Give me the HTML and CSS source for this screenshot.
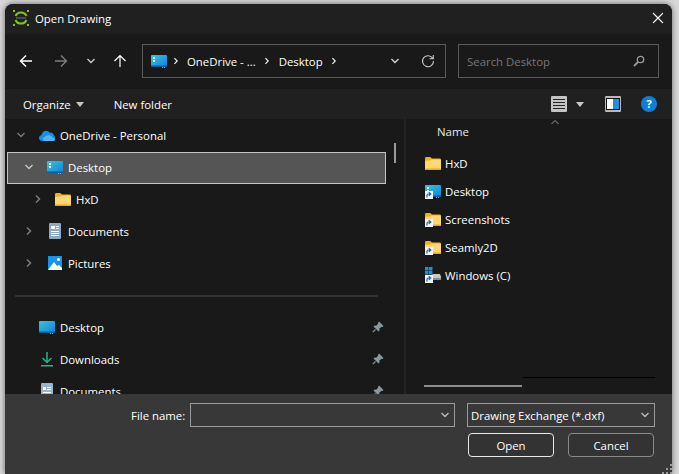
FILE: index.html
```html
<!DOCTYPE html>
<html lang="en">
<head>
  <meta charset="UTF-8" />
  <title>Open Drawing</title>
  <link rel="stylesheet" href="styles.css">
</head>
<body>

  <!-- icon sheet -->
  <svg class="icon-sheet" width="0" height="0">
    <symbol id="i-folder" viewBox="0 0 16 16">
      <path d="M0 3.500C0 2.700.5 2 1.300 2h4l1.700 1.500h7.700c.7 0 1.300.6 1.300 1.300V6H0z" fill="#f2b01e"/>
      <path d="M0 6l6-.8 1-.7h7.700c.7 0 1.300.6 1.300 1.300v7.900c0 .7-.6 1.300-1.300 1.300H1.300C.6 15 0 14.400 0 13.700z" fill="#fdd873"/>
      <path d="M0 13.500h16v.4c0 .6-.5 1.100-1.100 1.100H1.100C.5 15 0 14.500 0 13.900z" fill="#e8a81c"/>
    </symbol>
    <linearGradient id="g-desktop" x1="0" y1="0" x2="1" y2="1">
      <stop offset="0" stop-color="#35c4e2"/>
      <stop offset="1" stop-color="#1186d6"/>
    </linearGradient>
    <symbol id="i-desktop" viewBox="0 0 16 16">
      <rect x="0" y="2" width="16" height="11" rx="1" fill="url(#g-desktop)"/>
      <rect x="0" y="12.500" width="16" height="1.500" fill="#0f5c9e"/>
      <rect x="11" y="14" width="1" height="1" fill="#7fb8d8"/>
      <rect x="13" y="14" width="1" height="1" fill="#7fb8d8"/>
    </symbol>
    <symbol id="i-desktop-dots" viewBox="0 0 16 16">
      <use href="#i-desktop" width="16" height="16"/>
      <rect x="2" y="4" width="2" height="2" fill="#fff"/>
      <rect x="2" y="7" width="2" height="2" fill="#fff"/>
    </symbol>
    <symbol id="i-docs" viewBox="0 0 16 16">
      <rect x="2" y="0" width="12" height="16" rx="1" fill="#8fa9c4"/>
      <rect x="4" y="3" width="4" height="3" fill="#fff"/>
      <path d="M9 3.500h3M9 5.500h3M4 8.500h8M4 10.500h8M4 12.500h8" stroke="#fff" fill="none"/>
    </symbol>
    <symbol id="i-docs-wide" viewBox="0 0 16 16">
      <rect x="2" y="0" width="12" height="16" rx="1" fill="#9db4cf"/>
      <rect x="4" y="4" width="3" height="3" fill="#fff"/>
      <path d="M8 4.500h4M8 6.500h4M4 9.500h8" stroke="#fff" fill="none"/>
    </symbol>
    <symbol id="i-pictures" viewBox="0 0 16 16">
      <rect x="1" y="1" width="14" height="14" fill="#1893e6"/>
      <circle cx="11.500" cy="4.500" r="1.500" fill="#fff"/>
      <path d="M1 15L7 7l3 4 2-1 3 3v2z" fill="#fff"/>
    </symbol>
    <symbol id="i-cloud" viewBox="0 0 16 11">
      <path d="M3.500 11C1.500 11 0 9.700 0 8c0-1.500 1-2.700 2.500-3C3.300 2 5 .8 7 .8c1.400 0 2.700.7 3.500 1.700 2-.3 4 1 4.500 3 .7.3 1 1.300 1 2.400 0 1.700-1.200 3.100-3 3.100z" fill="#1a8fe8"/>
      <path d="M6 11c-1.500 0-2.200-1-2.200-2 0-1.200 1-2 2.200-2 .7-1.200 2-2 3.400-2 2 0 3.300 1 3.800 2.500 1.500 0 2.800 1 2.800 2 0 1-1 1.500-2 1.500z" fill="#4bb7f5"/>
    </symbol>
    <symbol id="i-download" viewBox="0 0 16 16">
      <path d="M8 1v10M3.500 7L8 11.500 12.500 7" stroke="#22b58a" stroke-width="1.500" fill="none"/>
      <rect x="2" y="14" width="12" height="1.500" fill="#22b58a"/>
    </symbol>
    <symbol id="i-pin" viewBox="0 0 12 12">
      <path d="M7 .5l4.500 4.500-1 1-1-.3L7.300 7.800l.2 1.700-1 1L1.500 5.500l1-1 1.700.2 2.100-2.100L6 1.500z" fill="#8a979e"/>
      <path d="M3.500 8.500L.8 11.200" stroke="#8a979e" stroke-width="1.200"/>
    </symbol>
    <symbol id="i-shortcut" viewBox="0 0 8 8">
      <rect width="8" height="8" fill="#f4f4f4"/>
      <path d="M2 6.500V4.500c0-1 .7-1.500 1.500-1.500H5M3.800 1.300L5.800 3 3.800 4.700" stroke="#1667c0" stroke-width="1.200" fill="none"/>
    </symbol>
    <symbol id="i-down" viewBox="0 0 10 10"><path d="M1.500 3L5 6.500 8.500 3" stroke="currentColor" stroke-width="1.400" fill="none"/></symbol>
    <symbol id="i-right" viewBox="0 0 10 10"><path d="M3 1.500L6.500 5 3 8.500" stroke="currentColor" stroke-width="1.500" fill="none"/></symbol>
  </svg>

  <div class="window">

    <div class="titlebar">
      <svg class="logo" width="16" height="16" viewBox="0 0 16 16">
        <path d="M2.500 6a6 6 0 0 1 11 0M2.500 10a6 6 0 0 0 11 0" stroke="#7cc41e" stroke-width="2" fill="none"/>
        <rect x="3" y="7" width="10" height="2" fill="#4a4a4a"/>
        <path d="M0 0h2v2H0zM14 0h2v2h-2zM0 14h2v2H0zM14 14h2v2h-2z" fill="#7cc41e"/>
      </svg>
      <span class="title">Open Drawing</span>
      <svg class="close" width="12" height="12" viewBox="0 0 12 12">
        <path d="M1 1l10 10M11 1L1 11" stroke="#fff" stroke-width="1.100"/>
      </svg>
    </div>

    <div class="navbar">
      <div class="nav-buttons">
        <svg class="nav-arrow" width="14" height="14" viewBox="0 0 14 14"><path d="M13 7H1.500M7 1.500L1.500 7 7 12.500" stroke="#fff" stroke-width="1.400" fill="none"/></svg>
        <svg class="nav-arrow dim" width="14" height="14" viewBox="0 0 14 14"><path d="M1 7h11.500M7 1.500L12.500 7 7 12.500" stroke="#7d7d7d" stroke-width="1.400" fill="none"/></svg>
        <svg class="nav-recent" width="10" height="10"><use href="#i-down"/></svg>
        <svg class="nav-arrow up" width="14" height="14" viewBox="0 0 14 14"><path d="M7 13V1.500M1.500 7L7 1.500 12.500 7" stroke="#fff" stroke-width="1.200" fill="none"/></svg>
      </div>
      <div class="address">
        <svg class="addr-icon" width="16" height="16"><use href="#i-desktop-dots"/></svg>
        <svg class="crumb-sep first" width="8" height="10"><use href="#i-right"/></svg>
        <span>OneDrive - ...</span>
        <svg class="crumb-sep" width="8" height="10"><use href="#i-right"/></svg>
        <span>Desktop</span>
        <svg class="crumb-sep" width="8" height="10"><use href="#i-right"/></svg>
        <svg class="addr-down" width="10" height="10"><use href="#i-down"/></svg>
        <svg class="addr-refresh" width="14" height="14" viewBox="0 0 14 14">
          <path d="M11.800 4.500A5.500 5.500 0 1 0 12.500 7M12.300 1v3.800H8.500" stroke="#c8c8c8" stroke-width="1.100" fill="none"/>
        </svg>
      </div>
      <div class="search">
        <span>Search Desktop</span>
        <svg width="12" height="12" viewBox="0 0 12 12">
          <circle cx="7.500" cy="4.500" r="3.200" stroke="#9a9a9a" stroke-width="1.300" fill="none"/>
          <path d="M5 7L1 11" stroke="#9a9a9a" stroke-width="1.800"/>
        </svg>
      </div>
    </div>

    <div class="toolbar">
      <span class="tool organize">Organize</span>
      <span class="caret light"></span>
      <span class="tool new-folder">New folder</span>
      <div class="tool-icons">
        <svg class="view-icon" width="16" height="16" viewBox="0 0 16 16">
          <rect width="16" height="16" rx="1" fill="#c4c4c4"/>
          <path d="M2 3.500h12M2 6.500h12M2 9.500h12M2 12.500h12" stroke="#222"/>
        </svg>
        <span class="caret view-caret"></span>
        <svg class="pane-icon" width="16" height="16" viewBox="0 0 16 16">
          <rect width="16" height="16" rx="1" fill="#b8b8b8"/>
          <rect x="1" y="2" width="14" height="12" fill="#111"/>
          <rect x="2" y="3" width="6" height="10" fill="#fff"/>
          <rect x="8" y="3" width="6" height="10" fill="#1d8fe0"/>
        </svg>
        <span class="help">?</span>
      </div>
    </div>

    <div class="content">
      <div class="tree">
        <div class="tree-row">
          <svg class="twist" width="10" height="10"><use href="#i-down"/></svg>
          <svg class="cloud" width="16" height="11"><use href="#i-cloud"/></svg>
          <span>OneDrive - Personal</span>
        </div>
        <div class="tree-row selected level-1">
          <svg class="twist bright" width="10" height="10"><use href="#i-down"/></svg>
          <svg width="16" height="16"><use href="#i-desktop-dots"/></svg>
          <span>Desktop</span>
        </div>
        <div class="tree-row level-2">
          <svg class="twist" width="10" height="10"><use href="#i-right"/></svg>
          <svg width="16" height="16"><use href="#i-folder"/></svg>
          <span>HxD</span>
        </div>
        <div class="tree-row level-1">
          <svg class="twist" width="10" height="10"><use href="#i-right"/></svg>
          <svg width="16" height="16"><use href="#i-docs"/></svg>
          <span>Documents</span>
        </div>
        <div class="tree-row level-1">
          <svg class="twist" width="10" height="10"><use href="#i-right"/></svg>
          <svg width="16" height="16"><use href="#i-pictures"/></svg>
          <span>Pictures</span>
        </div>
        <div class="tree-divider"></div>
        <div class="tree-row quick">
          <svg width="16" height="16"><use href="#i-desktop"/></svg>
          <span>Desktop</span>
          <svg class="pin" width="12" height="12"><use href="#i-pin"/></svg>
        </div>
        <div class="tree-row quick">
          <svg width="16" height="16"><use href="#i-download"/></svg>
          <span>Downloads</span>
          <svg class="pin" width="12" height="12"><use href="#i-pin"/></svg>
        </div>
        <div class="tree-row quick">
          <svg width="16" height="16"><use href="#i-docs-wide"/></svg>
          <span>Documents</span>
          <svg class="pin" width="12" height="12"><use href="#i-pin"/></svg>
        </div>
        <div class="tree-scroll"></div>
      </div>

      <div class="files">
        <svg class="sort-up" width="10" height="6" viewBox="0 0 10 6"><path d="M1.500 5L5 1.500 8.500 5" stroke="#9a9a9a" fill="none"/></svg>
        <div class="col-head">Name</div>
        <div class="file-row">
          <svg width="16" height="16"><use href="#i-folder"/></svg>
          <span>HxD</span>
        </div>
        <div class="file-row">
          <span class="linked">
            <svg width="16" height="16"><use href="#i-desktop-dots"/></svg>
            <svg class="badge" width="8" height="8"><use href="#i-shortcut"/></svg>
          </span>
          <span>Desktop</span>
        </div>
        <div class="file-row">
          <span class="linked">
            <svg width="16" height="16"><use href="#i-folder"/></svg>
            <svg class="badge" width="8" height="8"><use href="#i-shortcut"/></svg>
          </span>
          <span>Screenshots</span>
        </div>
        <div class="file-row">
          <span class="linked">
            <svg width="16" height="16"><use href="#i-folder"/></svg>
            <svg class="badge" width="8" height="8"><use href="#i-shortcut"/></svg>
          </span>
          <span>Seamly2D</span>
        </div>
        <div class="file-row">
          <span class="linked">
            <svg width="16" height="16" viewBox="0 0 16 16">
              <path d="M0 0h3.500v3.500H0zM4 0h3.500v3.500H4zM0 4h3.500v3.500H0zM4 4h3.500v3.500H4z" fill="#1d8fe0"/>
              <path d="M6 9l2-2h7l1 3v3H6z" fill="#c9c9c9"/>
              <rect x="6" y="11" width="10" height="2" fill="#8d8d8d"/>
            </svg>
            <svg class="badge" width="8" height="8"><use href="#i-shortcut"/></svg>
          </span>
          <span>Windows (C)</span>
        </div>
        <div class="h-track"></div>
        <div class="h-thumb"></div>
      </div>
    </div>

    <div class="footer">
      <div class="footer-row">
        <label class="file-label">File name:</label>
        <div class="combo name-combo">
          <svg width="10" height="10"><use href="#i-down"/></svg>
        </div>
        <div class="combo type-combo">
          <span>Drawing Exchange (*.dxf)</span>
          <svg width="10" height="10"><use href="#i-down"/></svg>
        </div>
      </div>
      <div class="footer-buttons">
        <button class="btn btn-default">Open</button>
        <button class="btn">Cancel</button>
      </div>
      <div class="grip">
        <i></i><i></i><i></i><i></i><i></i><i></i>
      </div>
    </div>

  </div>
</body>
</html>
```

FILE: styles.css
```css
* {
  margin: 0;
  padding: 0;
  box-sizing: border-box;
  font-family: 'Open Sans', 'Noto Sans', sans-serif;
}

body {
  width: 679px;
  height: 474px;
  overflow: hidden;
  background: #d9d9d9;
  padding: 4px 7px 0 5px;
  font-size: 11.4px;
  color: #fff;
}

.icon-sheet {
  position: absolute;
}

svg {
  display: block;
  flex-shrink: 0;
}

.window {
  width: 667px;
  height: 470px;
  display: flex;
  flex-direction: column;
  background: #191919;
  border-radius: 8px 8px 0 0;
  overflow: hidden;
  box-shadow: 0 0 6px rgba(0, 0, 0, 0.55);
}

/* title bar */
.titlebar {
  height: 30px;
  flex-shrink: 0;
  display: flex;
  align-items: center;
  padding: 0 8px 2px 8px;
  background: #202020;
}

.title {
  margin-left: 6px;
  flex: 1;
}

/* address row */
.navbar {
  height: 55px;
  flex-shrink: 0;
  display: flex;
  align-items: center;
  background: #191919;
  padding: 0 13px 1px 0;
}

.nav-buttons {
  width: 137px;
  display: flex;
  align-items: center;
  padding-left: 14px;
}

.nav-arrow.dim {
  margin-left: 21px;
}

.nav-recent {
  margin-left: 18px;
  color: #c8c8c8;
}

.nav-arrow.up {
  margin-left: 17px;
}

.address {
  width: 304px;
  height: 34px;
  display: flex;
  align-items: center;
  border: 1px solid #5a5a5a;
  padding-left: 8px;
}

.crumb-sep {
  margin: 0 8px 0 7px;
  color: #f0f0f0;
}

.crumb-sep.first {
  margin: 0 7px 0 5px;
}

.addr-down {
  margin-left: auto;
  color: #d0d0d0;
}

.addr-refresh {
  margin: 0 10px 0 21px;
}

.search {
  width: 201px;
  height: 34px;
  margin-left: 12px;
  display: flex;
  align-items: center;
  justify-content: space-between;
  border: 1px solid #5a5a5a;
  padding: 0 13px 0 8px;
  color: #767676;
}

/* toolbar */
.toolbar {
  height: 30px;
  flex-shrink: 0;
  display: flex;
  align-items: center;
  background: #202020;
  padding-left: 18px;
}

.caret {
  width: 0;
  height: 0;
  border-left: 4.5px solid transparent;
  border-right: 4.5px solid transparent;
  border-top: 5px solid #c8c8c8;
}

.caret.light {
  margin-left: 5px;
}

.new-folder {
  margin-left: 30px;
}

.tool-icons {
  margin-left: auto;
  display: flex;
  align-items: center;
  padding-right: 15px;
}

.view-caret {
  margin-left: 9px;
}

.pane-icon {
  margin-left: 21px;
}

.help {
  width: 16px;
  height: 16px;
  margin-left: 20px;
  border-radius: 50%;
  background: #0f7fd6;
  font-size: 11px;
  font-weight: 700;
  line-height: 16px;
  text-align: center;
}

/* panes */
.content {
  flex: 1;
  min-height: 0;
  display: flex;
  background: #191919;
}

.tree {
  position: relative;
  width: 401px;
  flex-shrink: 0;
  border-right: 2px solid #242424;
  overflow: hidden;
  padding: 1px 0 0 2px;
}

.tree-row {
  height: 32px;
  width: 379px;
  display: flex;
  align-items: center;
  padding: 0 0 2px 8px;
  border: 1px solid transparent;
}

.tree-row span {
  margin-left: 5px;
}

.twist {
  margin-right: 13px;
  color: #7a7a7a;
}

.twist.bright {
  color: #c8c8c8;
}

.tree-row.level-1 {
  padding-left: 16px;
}

.tree-row.level-2 {
  padding-left: 25px;
}

.tree-row.level-2 .twist {
  margin-right: 12px;
}

.tree-row.selected {
  background: #555555;
  border-color: #c4c4c4;
}

.tree-divider {
  height: 2px;
  width: 363px;
  margin: 15px 0 15px 8px;
  background: #333333;
}

.tree-row.quick {
  padding-left: 31px;
}

.pin {
  margin-left: auto;
  margin-right: 1px;
}

.tree-scroll {
  position: absolute;
  top: 24px;
  left: 389px;
  width: 2px;
  height: 20px;
  background: #9a9a9a;
}

.files {
  position: relative;
  flex: 1;
  padding: 0 0 0 19px;
}

.sort-up {
  position: absolute;
  top: 0;
  left: 144px;
}

.col-head {
  height: 30px;
  padding: 5px 0 0 12px;
  color: #e8e8e8;
}

.file-row {
  height: 28px;
  display: flex;
  align-items: center;
  gap: 4px;
}

.linked {
  position: relative;
  display: block;
}

.badge {
  position: absolute;
  left: 0;
  bottom: 0;
}

.h-track {
  position: absolute;
  left: 116px;
  top: 258px;
  width: 133px;
  height: 1px;
  background: #000;
}

.h-thumb {
  position: absolute;
  left: 18px;
  top: 266px;
  width: 98px;
  height: 2px;
  background: #8c8c8c;
}

/* bottom bar */
.footer {
  position: relative;
  height: 80px;
  flex-shrink: 0;
  background: #383838;
  padding: 9px 17px 0 126px;
}

.footer-row {
  display: flex;
  align-items: center;
}

.file-label {
  width: 59px;
}

.combo {
  height: 24px;
  display: flex;
  align-items: center;
  justify-content: space-between;
  border: 1px solid #9b9b9b;
  color: #fff;
}

.combo svg {
  color: #b8b8b8;
}

.name-combo {
  width: 265px;
  justify-content: flex-end;
  padding-right: 4px;
}

.type-combo {
  width: 188px;
  margin-left: 12px;
  padding: 0 4px 0 3px;
}

.footer-buttons {
  display: flex;
  justify-content: flex-end;
  gap: 14px;
  margin-top: 6px;
  padding-right: 1px;
}

.btn {
  width: 86px;
  height: 24px;
  font-size: 11.4px;
  color: #fff;
  background: #333333;
  border: 1px solid #8a8a8a;
  border-radius: 4px;
}

.btn-default {
  border-color: #e8e8e8;
}

.grip {
  position: absolute;
  right: 0;
  bottom: 0;
  width: 10px;
  height: 10px;
  display: grid;
  grid-template-columns: repeat(3, 2px);
  grid-template-rows: repeat(3, 2px);
  gap: 2px;
}

.grip i {
  background: #9a9a9a;
}

.grip i:nth-child(1) {
  grid-area: 1 / 3;
}

.grip i:nth-child(2) {
  grid-area: 2 / 2;
}

.grip i:nth-child(3) {
  grid-area: 2 / 3;
}

.grip i:nth-child(4) {
  grid-area: 3 / 1;
}

.grip i:nth-child(5) {
  grid-area: 3 / 2;
}

.grip i:nth-child(6) {
  grid-area: 3 / 3;
}
```
